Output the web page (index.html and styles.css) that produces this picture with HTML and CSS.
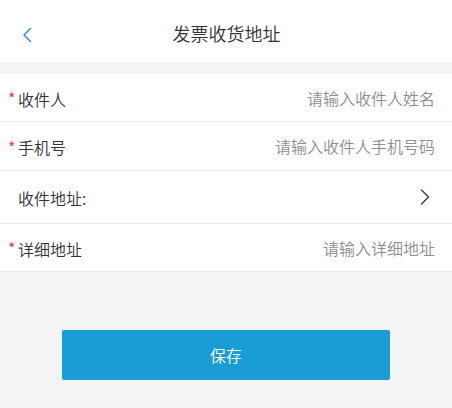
FILE: index.html
```html
<!DOCTYPE html>
<html lang="zh-CN">
<head>
<meta charset="utf-8">
<title>发票收货地址</title>
<link rel="stylesheet" href="styles.css">
</head>
<body>
<div class="page">
  <header class="topbar">
    <span class="back">
      <svg width="10" height="16" viewBox="0 0 10 16"><path d="M8.5 1.5 L2 8 L8.5 14.5" fill="none" stroke="#3b93d3" stroke-width="1.6" stroke-linecap="round" stroke-linejoin="round"/></svg>
    </span>
    <h1 class="title">发票收货地址</h1>
  </header>
  <section class="form">
    <div class="row r1">
      <span class="star">*</span><span class="label">收件人</span>
      <span class="ph">请输入收件人姓名</span>
    </div>
    <div class="row r2">
      <span class="star">*</span><span class="label">手机号</span>
      <span class="ph">请输入收件人手机号码</span>
    </div>
    <div class="row r3">
      <span class="star"></span><span class="label">收件地址:</span>
      <span class="arrow">
        <svg width="10" height="16" viewBox="0 0 10 16"><path d="M1.5 1 L8.5 8 L1.5 15" fill="none" stroke="#444" stroke-width="1.5" stroke-linecap="round" stroke-linejoin="round"/></svg>
      </span>
    </div>
    <div class="row r4">
      <span class="star">*</span><span class="label">详细地址</span>
      <span class="ph">请输入详细地址</span>
    </div>
  </section>
  <div class="actions">
    <button class="save">保存</button>
  </div>
</div>
</body>
</html>
```
FILE: styles.css
```css
html, body {
  margin: 0;
  padding: 0;
  background: #f5f5f5;
  font-family: "Noto Sans CJK SC", "Noto Sans", sans-serif;
}
.page {
  width: 452px;
  min-height: 408px;
  background: #f5f5f5;
}
.topbar {
  height: 62px;
  background: #fff;
  display: flex;
  align-items: center;
  justify-content: center;
  position: relative;
}
.back {
  position: absolute;
  left: 22px;
  top: 27px;
  width: 10px;
  height: 16px;
  display: flex;
}
.title {
  margin: 0;
  font-size: 18px;
  font-weight: 350;
  color: #333;
  line-height: 1;
  padding-left: 1px;
  padding-top: 3px;
}
.form {
  margin-top: 12px;
  background: #fff;
}
.row {
  display: flex;
  align-items: center;
  padding: 0 17px 0 8px;
  border-bottom: 1px solid #ececec;
  box-sizing: border-box;
}
.r1 { height: 48px; }
.r2 { height: 49px; }
.r3 { height: 53px; }
.r4 { height: 48px; }
.star {
  width: 10px;
  color: #d9443f;
  font-size: 16px;
  line-height: 1;
  align-self: center;
  margin-top: 1px;
}
.label {
  font-size: 16px;
  font-weight: 350;
  color: #333;
  line-height: 1;
  flex: 1;
  padding-top: 2px;
}
.ph {
  font-size: 16px;
  font-weight: 350;
  color: #8e8e8e;
  line-height: 1;
}
.arrow {
  display: flex;
  margin-right: 5px;
}
.actions {
  padding-top: 58px;
  padding-left: 62px;
}
.save {
  width: 328px;
  height: 50px;
  border: none;
  border-radius: 2px;
  background: #1a9cd4;
  color: #fff;
  font-family: "Noto Sans CJK SC", "Noto Sans", sans-serif;
  font-size: 16px;
  font-weight: 350;
  padding: 0;
  margin: 0;
}
```
